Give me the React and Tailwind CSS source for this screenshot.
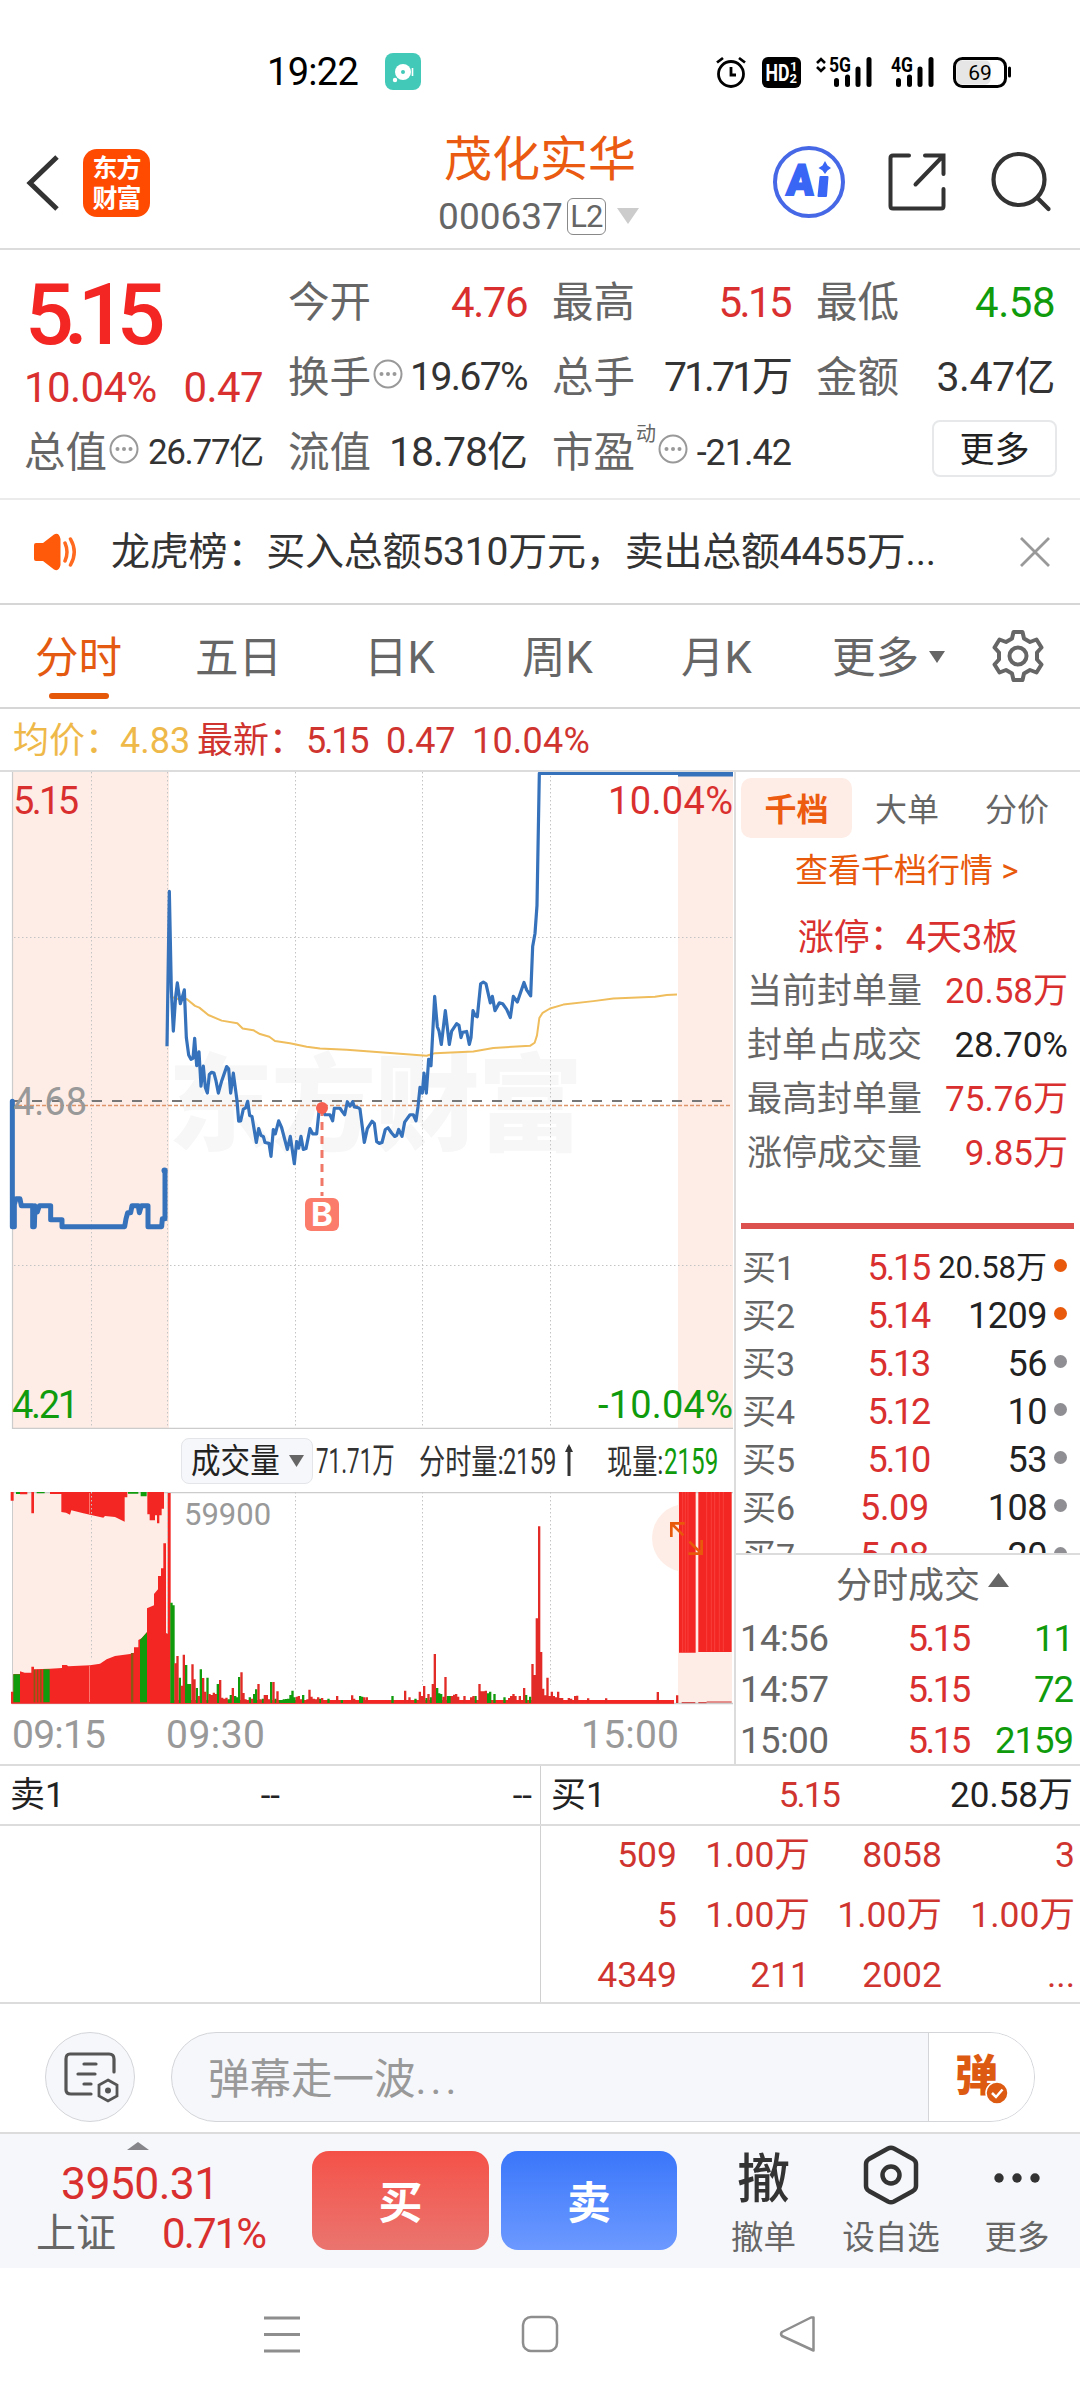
import React from "react";

const RED = "#f32624";
const GREEN = "#0f9b0c";

/* ---------- status bar ---------- */

function Signal({ label, arrows }) {
  return (
    <svg width="58" height="34" viewBox="0 0 58 34" className="overflow-visible">
      {arrows && (
        <g fill="none" stroke="#000" strokeWidth="2.6">
          <path d="M1 7 L5 3 L9 7" />
          <path d="M1 11 L5 15 L9 11" />
        </g>
      )}
      <text x="13" y="15.500" fontSize="20" fontWeight="700" fontFamily="Roboto" textLength="22" lengthAdjust="spacingAndGlyphs">
        {label}
      </text>
      <g stroke="#000" strokeWidth="5" strokeLinecap="round">
        <path d="M20.5 24.500 V28.500" />
        <path d="M31.5 21 V28.500" />
        <path d="M42 13 V28.500" />
        <path d="M53 3.500 V28.500" />
      </g>
    </svg>
  );
}

function StatusBar() {
  return (
    <div className="flex h-[120px] items-start pt-[53px]">
      <div className="ml-[267px] flex h-[38px] w-[92px] items-center text-[38px] leading-none tracking-[-0.7px] text-black">19:22</div>
      <svg width="36" height="37" viewBox="0 0 36 37" className="ml-[26px]">
        <rect width="36" height="37" rx="8" fill="#43c9b8" />
        <circle cx="18" cy="19" r="8" fill="#fff" />
        <circle cx="18" cy="19" r="2" fill="#43c9b8" />
        <circle cx="10" cy="27" r="2.2" fill="#fff" />
        <path d="M27.5 15 V23" stroke="#fff" strokeWidth="1.6" />
      </svg>
      <svg width="32" height="34" viewBox="0 0 32 34" className="ml-[294px] mt-[2px]" fill="none" stroke="#000" strokeWidth="2.800">
        <circle cx="16" cy="19" r="12.5" />
        <path d="M16 12 V20 H21" />
        <path d="M2 7.500 L8 3 M30 7.500 L24 3" />
      </svg>
      <svg width="39" height="31" viewBox="0 0 39 31" className="ml-[15px] mt-[4px]">
        <rect width="39" height="31" rx="6" />
        <g fill="#fff" fontFamily="Roboto" fontWeight="700">
          <text x="3.500" y="24" fontSize="23" textLength="24" lengthAdjust="spacingAndGlyphs">HD</text>
          <text x="28" y="14" fontSize="13">1</text>
          <text x="27.5" y="26" fontSize="13">2</text>
        </g>
      </svg>
      <div className="ml-[15px] mt-[3px] w-[58px]"><Signal label="5G" arrows /></div>
      <div className="ml-[4px] mt-[3px] w-[58px]"><Signal label="4G" /></div>
      <svg width="60" height="31" viewBox="0 0 60 31" className="ml-[17px] mt-[4px]">
        <rect x="1.5" y="1.5" width="51" height="28" rx="8" fill="#fff" stroke="#000" strokeWidth="3" />
        <rect x="3.5" y="3.5" width="34" height="24" rx="5" fill="#e6e6e6" />
        <path d="M56.5 11 V19" stroke="#000" strokeWidth="3" strokeLinecap="round" />
        <text x="27" y="22.500" fontSize="21" fontFamily="Roboto" textAnchor="middle">69</text>
      </svg>
    </div>
  );
}

/* ---------- header ---------- */

function Header() {
  return (
    <div className="flex h-[130px] items-start border-b-2 border-[#dcdcdc]">
      <svg width="34" height="58" viewBox="0 0 34 58" className="ml-[26px] mt-[34px]" fill="none" stroke="#333" strokeWidth="5">
        <path d="M31 3 L4 29 L31 55" />
      </svg>
      <div className="ml-[23px] mt-[29px] flex h-[68px] w-[67px] flex-col items-center justify-center gap-[5px] rounded-[14px] bg-[#ff4a02] text-[25px] font-bold leading-none tracking-[-1px] text-white">
        <span>东方</span>
        <span>财富</span>
      </div>
      <div className="ml-[230px] flex w-[320px] flex-col items-center">
        <div className="mt-[16px] text-[48px] leading-none text-[#ea5a10]">茂化实华</div>
        <div className="mt-[12px] flex h-[40px] items-center">
          <span className="ml-[-3px] text-[37px] leading-none text-[#666]">000637</span>
          <span className="ml-[4px] flex h-[37px] w-[39px] items-center justify-center rounded-[6px] border-[1.5px] border-[#888] text-[31px] leading-none tracking-[-1px] text-[#666]">L2</span>
          <svg width="22" height="16" viewBox="0 0 22 16" className="ml-[11px]"><path d="M0 0 H22 L11 16 Z" fill="#ccc" /></svg>
        </div>
      </div>
      <svg width="74" height="74" viewBox="0 0 74 74" className="ml-[72px] mt-[25px]">
        <circle cx="37" cy="37" r="34" fill="none" stroke="#4668e6" strokeWidth="4" />
        <text x="17.500" y="50" fontSize="43" fontFamily="Roboto" fontWeight="900" fill="#3a66f5" stroke="#3a66f5" strokeWidth="2" textLength="27" lengthAdjust="spacingAndGlyphs" transform="skewX(-4)">A</text>
        <path d="M48.500 32 H55.500 L54 51 H46.500 Z" fill="#3a66f5" stroke="#3a66f5" strokeWidth="2" strokeLinejoin="round" />
        <path d="M53 16 L55.5 20.5 L59 23 L55.500 25.500 L53 29 L50.500 25.500 L46.500 23 L50.500 20.500 Z" fill="#3a66f5" />
      </svg>
      <svg width="60" height="60" viewBox="0 0 60 60" className="ml-[41px] mt-[32px]" fill="none" stroke="#333" strokeWidth="4" strokeLinecap="round">
        <path d="M22 3.500 H6 Q3.500 3.500 3.500 6 V54 Q3.500 56.500 6 56.500 H54 Q56.500 56.500 56.500 54 V37" />
        <path d="M38 3.500 H56.500 V22 M56 4 L28.500 32.500" />
      </svg>
      <svg width="62" height="62" viewBox="0 0 62 62" className="ml-[44px] mt-[31px]" fill="none" stroke="#333" strokeWidth="4.200" strokeLinecap="round">
        <circle cx="28" cy="28.500" r="25.500" />
        <path d="M46.500 47 L57.500 58" />
      </svg>
    </div>
  );
}

/* ---------- quote summary ---------- */

function Info({ className }) {
  return (
    <svg width="30" height="30" viewBox="0 0 30 30" className={className}>
      <circle cx="15" cy="15" r="13.500" fill="none" stroke="#999" strokeWidth="2" />
      <g fill="#999"><circle cx="8.500" cy="15" r="2" /><circle cx="15" cy="15" r="2" /><circle cx="21.500" cy="15" r="2" /></g>
    </svg>
  );
}

function Stat({ label, value, className, extra, width }) {
  return (
    <div className={"flex h-[75px] items-center " + width}>
      <span className="text-[41.5px] leading-none text-[#666]">{label}</span>
      {extra}
      <span className={"ml-auto leading-none whitespace-nowrap " + className}>{value}</span>
    </div>
  );
}

function Summary() {
  const mid = "w-[239px] mr-[25px]";
  const mid2 = "w-[238px] mr-[26px]";
  return (
    <div className="flex h-[250px] items-start border-b-2 border-[#ebebeb] pl-[24px] pt-[15px]">
      <div className="w-[264px]">
        <div className="h-[96px] pl-[1px] pt-[7px] text-[86px] font-medium leading-none tracking-[-10px] text-[#f32624]">5.15</div>
        <div className="flex h-[54px] w-[239px] items-center justify-between text-[42px] leading-none tracking-[-0.600px] text-[#d9302f]">
          <span>10.04%</span><span>0.47</span>
        </div>
        <Stat label="总值" extra={<Info className="ml-[2px] mb-[7px]" />} value="26.77亿" className="text-[35px] text-[#333] tracking-[-1.3px]" width="w-[239px]" />
      </div>
      <div>
        <div className="flex">
          <Stat label="今开" value="4.76" className="text-[42px] text-[#d9302f] tracking-[-1.5px]" width={mid} />
          <Stat label="最高" value="5.15" className="text-[42px] text-[#d9302f] tracking-[-2.600px]" width={mid2} />
          <Stat label="最低" value="4.58" className="text-[42px] text-[#0f9b0c] tracking-[-0.5px]" width="w-[239px]" />
        </div>
        <div className="flex">
          <Stat label="换手" extra={<Info className="ml-[2px] mb-[7px]" />} value="19.67%" className="text-[39px] text-[#333] tracking-[-1.6px]" width={mid} />
          <Stat label="总手" value="71.71万" className="text-[41px] text-[#333] tracking-[-3px]" width={mid2} />
          <Stat label="金额" value="3.47亿" className="text-[41px] text-[#333] tracking-[-0.5px]" width="w-[239px]" />
        </div>
        <div className="flex">
          <Stat label="流值" value="18.78亿" className="text-[41px] text-[#333] tracking-[-1px]" width={mid} />
          <Stat
            label="市盈"
            extra={<><span className="mb-[38px] ml-[1px] text-[20px] leading-none text-[#666]">动</span><Info className="mb-[7px] ml-[2px]" /></>}
            value="-21.42"
            className="text-[36px] text-[#333] tracking-[-1px]"
            width="w-[239px] mr-[25px]"
          />
          <div className="flex w-[241px] justify-end pt-[5px]">
            <div className="flex h-[57px] w-[125px] items-center justify-center rounded-[8px] border-2 border-[#e6e8ea] pt-[3px] text-[35px] leading-none text-[#222]">更多</div>
          </div>
        </div>
      </div>
    </div>
  );
}

function NewsBar() {
  return (
    <div className="flex h-[105px] items-center border-b-2 border-[#d6d6d6]">
      <svg width="46" height="38" viewBox="0 0 46 38" className="ml-[33px]">
        <path d="M1 12 Q1 10 3 10 H10 L21 1.500 Q26 -1 27.500 6 V32 Q26 39 21 36.500 L10 28 H3 Q1 28 1 26 Z" fill="#ff5a0a" />
        <path d="M32 10 Q36 19 32 28 M37.500 6 Q45 19 37.500 32" fill="none" stroke="#ff6a20" strokeWidth="3.500" strokeLinecap="round" />
      </svg>
      <span className="ml-[32px] w-[831px] whitespace-nowrap pt-[2px] text-[39px] leading-none tracking-[-0.200px] text-[#333]">龙虎榜：买入总额5310万元，卖出总额4455万...</span>
      <svg width="30" height="30" viewBox="0 0 30 30" className="ml-[78px]" stroke="#999" strokeWidth="2.800"><path d="M1 1 L29 29 M29 1 L1 29" /></svg>
    </div>
  );
}

function Tabs() {
  return (
    <div className="flex h-[104px] items-center border-b-2 border-[#d6d6d6] text-[43.5px] leading-none text-[#666]">
      <div className="relative ml-[35px] w-[160px] pt-[6px] text-[#e35a10]">
        分时
        <div className="absolute left-[14px] top-[62px] h-[6px] w-[60px] rounded-full bg-[#e5580a]" />
      </div>
      <div className="w-[169px] pt-[6px]">五日</div>
      <div className="w-[158px] pt-[6px]">日K</div>
      <div className="w-[159px] pt-[6px]">周K</div>
      <div className="w-[151px] pt-[6px]">月K</div>
      <div className="w-[97px] pt-[6px]">更多</div>
      <svg width="16" height="12" viewBox="0 0 16 12" className="mt-[1px]"><path d="M0 0 H16 L8 12 Z" fill="#666" /></svg>
      <svg width="54" height="54" viewBox="0 0 54 54" className="ml-[46px]" fill="none" stroke="#666" strokeWidth="4" strokeLinejoin="round">
        <path d="M22.500 3 H31.500 L33 9.500 L39 13 L45.500 10.500 L50.500 18.500 L46 23.500 V30.500 L50.500 35.500 L45.500 43.500 L39 41 L33 44.500 L31.500 51 H22.500 L21 44.500 L15 41 L8.500 43.500 L3.500 35.500 L8 30.500 V23.500 L3.500 18.500 L8.500 10.500 L15 13 L21 9.500 Z" />
        <circle cx="27" cy="27" r="8.500" />
      </svg>
    </div>
  );
}

function PriceLine() {
  return (
    <div className="flex h-[63px] items-center whitespace-nowrap border-b-2 border-[#dcdcdc] pt-[2px] text-[36px] leading-none text-[#d0342f]">
      <span className="ml-[13px] w-[107px] text-[#efb94a]">均价：</span>
      <span className="w-[77px] text-[#efb94a]">4.83</span>
      <span className="w-[109px]">最新：</span>
      <span className="w-[80px] tracking-[-2.200px]">5.15</span>
      <span className="w-[86px] tracking-[-0.200px]">0.47</span>
      <span className="tracking-[0.200px]">10.04%</span>
    </div>
  );
}

/* ---------- price chart ---------- */

const AUCTION = "37,787 37,1076 43,1076 43,1025 48,1012 60,1012 64,1028 98,1028 98,1076 103,1076 105,1028 112,1042 118,1028 152,1028 152,1060 186,1060 186,1076 374,1076 378,1058 383,1044 392,1044 396,1028 415,1028 418,1044 424,1028 444,1028 444,1076 485,1076 487,1058 495,1058 495,947";
const PRICE =
  "501,660 508,303 514,530 520,625 527,545 532,514 541,562 546,550 553,530 559,640 566,680 573,690 579,688 584,642 590,705 597,673 603,752 610,706 616,755 622,768 628,725 635,720 642,722 648,740 655,768 665,740 680,707 686,712 692,768 700,722 711,785 716,833 722,832 730,805 737,802 743,787 749,820 756,822 769,882 776,850 783,866 790,868 795,882 807,884 813,914 820,852 826,862 836,832 845,848 862,898 871,868 883,931 890,880 896,895 903,868 910,898 918,896 930,850 938,862 950,862 957,810 966,803 975,818 990,818 998,832 1003,803 1020,803 1028,812 1034,818 1042,788 1050,798 1058,788 1063,800 1075,802 1080,805 1093,882 1102,850 1116,833 1123,838 1130,880 1138,884 1146,882 1156,852 1164,848 1175,860 1184,868 1190,866 1196,852 1206,868 1214,835 1230,818 1240,818 1248,832 1254,800 1260,755 1267,768 1272,722 1279,768 1286,690 1293,705 1304,545 1312,615 1317,625 1324,656 1336,578 1348,656 1355,625 1370,608 1377,612 1383,640 1388,628 1400,626 1408,656 1413,640 1419,578 1426,590 1432,592 1442,516 1450,512 1458,516 1471,560 1477,545 1485,578 1498,560 1508,562 1520,575 1531,594 1540,545 1552,558 1572,513 1580,530 1592,544 1598,430 1605,400 1611,335 1618,31 2196,31";
const AVERAGE = "510,545 540,553 560,551 585,567 598,571 625,588 665,601 712,607 728,619 760,623 780,632 808,638 825,648 870,653 920,661 960,665 1040,668 1110,672 1280,682 1305,676 1420,672 1480,664 1590,659 1604,652 1611,635 1618,595 1628,583 1650,573 1690,564 1780,556 1840,550 1965,546 2000,542 2031,541";

function PriceChart() {
  return (
    <svg width="734" height="657" viewBox="0 772 734 657" className="block" fontFamily="Roboto">
      <rect x="13" y="772" width="156" height="657" fill="#feede6" />
      <rect x="678" y="772" width="55" height="657" fill="#feede6" />
      <text x="168" y="1142" fontSize="105" fontWeight="900" fontFamily="Noto Sans CJK SC" fill="#f7f7f7" textLength="415">东方财富</text>
      <g stroke="#c4c4c4" strokeWidth="1" strokeDasharray="1.500 2.500">
        <path d="M91.500 772 V1428 M167.500 772 V1428 M295.500 772 V1428 M422.500 772 V1428 M550.500 772 V1428" />
        <path d="M14 937.500 H732 M14 1265.500 H732" />
      </g>
      <path d="M12.500 772 V1429" stroke="#ccc" strokeWidth="1.200" />
      <path d="M12 1428.500 H733" stroke="#ccc" strokeWidth="1.500" />
      <path d="M12 1101 H732" stroke="#777" strokeWidth="2" strokeDasharray="10 10" />
      <path d="M12 1105.500 H732" stroke="#dd9468" strokeWidth="1.500" strokeDasharray="4 2" />
      <g transform="translate(0 760) scale(0.33333 0.43367)" fill="none" strokeLinejoin="round">
        <polyline points={AVERAGE} stroke="#efbd5c" strokeWidth="2" vectorEffect="non-scaling-stroke" />
        <polyline points={AUCTION} stroke="#3572bb" strokeWidth="5" strokeLinecap="round" vectorEffect="non-scaling-stroke" />
        <polyline points={PRICE} stroke="#3572bb" strokeWidth="3.200" vectorEffect="non-scaling-stroke" />
      </g>
      <circle cx="164.500" cy="1170.500" r="3" fill="#3572bb" />
      <rect x="678" y="772" width="55" height="4.500" fill="#3572bb" />
      <path d="M322 1108 V1196" stroke="#f07869" strokeWidth="3" strokeDasharray="8 6" />
      <circle cx="322" cy="1108" r="6" fill="#f45f50" />
      <rect x="305" y="1198" width="34" height="33" rx="6" fill="#fb7c6b" />
      <text x="322" y="1226" fontSize="33" fontWeight="700" fill="#fff" textAnchor="middle" fontFamily="Inter">B</text>
      <g fontSize="38">
        <text x="13" y="814" fill="#d9302f" textLength="66">5.15</text>
        <text x="13" y="1115" fill="#999" textLength="74">4.68</text>
        <text x="12" y="1418" fill="#0f9b0c" textLength="67">4.21</text>
        <text x="608" y="814" fill="#d9302f" textLength="125">10.04%</text>
        <text x="598" y="1418" fill="#0f9b0c" textLength="135">-10.04%</text>
      </g>
    </svg>
  );
}

/* ---------- volume ---------- */

function VolumeBar() {
  return (
    <div className="flex h-[63px] items-center text-[35px] leading-none text-[#333]">
      <div className="ml-[181px] flex h-[46px] w-[132px] items-center rounded-[8px] border border-[#e3e5e9] bg-[#f6f7fa] pl-[9px] pt-[1px] text-[#222]">
        <span className="w-[98px] origin-left scale-x-[0.87] whitespace-nowrap text-[34px]">成交量</span>
        <svg width="15" height="12" viewBox="0 0 15 12"><path d="M0 0 H15 L7.500 12 Z" fill="#666" /></svg>
      </div>
      <span className="ml-[3px] w-[103px] origin-left scale-x-[0.64] whitespace-nowrap pt-[2px]">71.71万</span>
      <span className="w-[84px] origin-left scale-x-[0.770] whitespace-nowrap pt-[2px] text-[34px]">分时量:</span>
      <span className="w-[61px] origin-left scale-x-[0.660] whitespace-nowrap pt-[2px] text-[36px]">2159</span>
      <svg width="8" height="34" viewBox="0 0 8 34" className="mb-[2px] ml-[1px]"><path d="M4 4 V33" stroke="#333" strokeWidth="3" /><path d="M0 9 L4 1 L8 9 Z" fill="#333" /></svg>
      <span className="ml-[34px] w-[57px] origin-left scale-x-[0.740] whitespace-nowrap pt-[2px] text-[34px]">现量:</span>
      <span className="w-[50px] origin-left scale-x-[0.670] whitespace-nowrap pt-[2px] text-[36px] text-[#0f9b0c]">2159</span>
    </div>
  );
}

/* Bar tops, as "x,top" pairs on a grid of thirds of a pixel. */
const RED_BARS = "526,730 532,708 545,797 551,704 577,733 583,778 596,828 609,774 615,815 628,822 634,825 641,818 647,822 660,780 666,833 673,836 679,833 698,804 724,757 730,819 736,838 743,840 756,836 775,792 781,838 794,825 800,825 807,838 820,786 832,814 890,830 896,828 902,838 922,838 928,809 934,830 941,836 947,838 954,832 966,834 1011,828 1056,826 1062,836 1092,832 1100,832 1215,812 1228,832 1259,815 1265,828 1272,798 1285,822 1298,792 1304,702 1330,830 1336,771 1355,828 1362,824 1368,822 1374,830 1393,828 1413,832 1420,828 1438,792 1445,814 1451,814 1457,812 1527,834 1533,828 1540,822 1546,828 1559,828 1572,804 1597,732 1603,765 1610,595 1617,319 1623,696 1629,806 1636,826 1642,773 1648,828 1655,815 1661,828 1668,832 1674,815 1680,834 1686,834 1706,834 1713,836 1725,828 1731,827 1764,835 1818,835 1973,816 2031,826";
const GREEN_BARS = "514,548 520,556 539,773 558,735 564,792 570,792 590,804 602,748 622,773 653,792 685,838 692,825 705,828 711,832 717,771 749,832 762,822 768,808 788,836 813,786 826,836 839,840 845,840 851,838 858,837 864,836 871,825 877,812 883,832 909,825 960,836 985,836 1025,840 1080,828 1086,830 1177,828 1246,836 1279,834 1292,832 1311,804 1317,820 1323,822 1343,828 1349,828 1426,828 1464,820 1470,815 1483,822 1513,832 1578,825 1590,830";

function bars(list) {
  return list
    .split(" ")
    .map((pair) => {
      const [x, top] = pair.split(",").map(Number);
      return `M${x - 3} ${top} h7 V849 h-7 Z`;
    })
    .join("");
}

function VolumeChart() {
  return (
    <svg width="734" height="272" viewBox="0 1492 734 272" className="block" fontFamily="Roboto">
      <rect x="13" y="1492" width="155" height="211" fill="#feede6" />
      <rect x="678" y="1492" width="54" height="211" fill="#feede6" />
      <path d="M12 1492.500 H733 M12 1703.500 H733" stroke="#ccc" strokeWidth="1.500" />
      <path d="M12.500 1492 V1703" stroke="#ccc" />
      <circle cx="686" cy="1538" r="34" fill="#feede6" />
      <g transform="translate(0 1420) scale(0.33333)">
        <path fill={RED} d="M33 849 V815 H40 V762 H60 V754 L74 758 H94 V740 H102 V748 L150 746 L186 744 V735 H200 L205 739 L270 736 L300 731 L320 718 L345 708 L390 702 L402 698 V682 H415 V660 L425 655 L441 636 V565 L462 556 V522 L474 508 V468 H483 V445 H490 V370 H498 V640 H503 V219 H512 V849 Z" />
        <path fill={GREEN} d="M40 763 H60 V849 H40Z M130 748 H149 V849 H130Z M420 660 L441 637 V849 H420Z" />
        <path fill="#8a5a14" d="M101 749 h5 V849 h-5Z M111 749 h4 V849 h-4Z M120 749 h5 V849 h-5Z M393 699 h7 V849 h-7Z" />
        <path fill={RED} d="M32 216 H41 V242 H32Z M60 216 H82 V223 H60Z M94 216 H102 V280 H94Z M150 216 H184 V222 H150Z M184 216 V276 L198 278 L210 284 L214 271 L250 280 L310 293 L315 288 L345 291 L374 305 V232 H382 V216Z M442 216 V283 H449 V301 H465 V286 H471 V310 H478 V286 H485 V266 H492 V216Z" />
        <path fill={GREEN} d="M48 216 H60 V222 H48Z M110 216 H134 V220 H110Z M384 216 H415 V221 H384Z M422 216 H440 V229 H422Z" />
        <path fill={RED} d="M512 840 H2022 V850 H512Z" />
        <path fill={RED} d="M33 847 H2022 V851 H33Z" />
        <path fill={GREEN} d={bars(GREEN_BARS)} />
        <path fill="#e22b26" d={bars(RED_BARS)} />
        <path fill={RED} d="M2037 216 H2087 V698 H2037Z M2095 216 H2195 V696 H2095Z" />
        <path d="M2048 216 V696 M2056 216 V696 M2064 216 V696 M2120 216 V694 M2134 216 V694 M2144 216 V694 M2158 216 V694 M2170 216 V694" stroke="#ff5b55" strokeWidth="1.500" />
        <path d="M2045 848 H2086 M2095 848 H2120 M2120 846 H2195" stroke="#c33" strokeWidth="3" />
        <g stroke="#e8590c" strokeWidth="8" fill="none">
          <path d="M2054 310 H2014 V351 M2016 312 L2050 346" />
          <path d="M2105 360 V401 H2065 M2103 399 L2068 365" />
        </g>
      </g>
      <g stroke="#c4c4c4" strokeDasharray="1.500 2.500">
        <path d="M91.500 1492 V1660 M167.500 1492 V1634 M295.500 1492 V1690 M422.500 1492 V1685 M550.500 1492 V1685" />
      </g>
      <path d="M89.500 1666 V1702 M89.500 1493 V1514" stroke="#ff8a80" strokeWidth="0.800" />
      <g fill="#999">
        <text x="184" y="1525" fontSize="31">59900</text>
        <g fontSize="39">
          <text x="12" y="1748" textLength="94">09:15</text>
          <text x="166" y="1748" textLength="99">09:30</text>
          <text x="581" y="1748" textLength="98">15:00</text>
        </g>
      </g>
    </svg>
  );
}

/* ---------- order book ---------- */

const LIMIT_STATS = [
  ["当前封单量", "20.58万", "text-[#d9302f]"],
  ["封单占成交", "28.70%", "text-[#222]"],
  ["最高封单量", "75.76万", "text-[#d9302f]"],
  ["涨停成交量", "9.85万", "text-[#d9302f]"],
];
const BIDS = [
  ["买1", "5.15", "20.58万", true],
  ["买2", "5.14", "1209", true],
  ["买3", "5.13", "56", false],
  ["买4", "5.12", "10", false],
  ["买5", "5.10", "53", false],
  ["买6", "5.09", "108", false],
  ["买7", "5.08", "20", false],
];
const TRADES = [
  ["14:56", "5.15", "11"],
  ["14:57", "5.15", "72"],
  ["15:00", "5.15", "2159"],
];

function OrderBook() {
  return (
    <div className="flex h-[992px] w-[346px] flex-col border-l-2 border-[#dcdcdc] leading-none [&>*]:shrink-0">
      <div className="mt-[6px] flex h-[60px] items-center pl-[5px] text-[32px] text-[#666]">
        <div className="flex h-[60px] w-[111px] items-center justify-center rounded-[10px] bg-[#feede6] pt-[3px] font-bold text-[#ec5b10]">千档</div>
        <div className="ml-[23px] w-[110px] pt-[3px]">大单</div>
        <div className="pt-[3px]">分价</div>
      </div>
      <div className="flex h-[63px] items-center pl-[59px] pt-[2px] text-[33px] text-[#e8590c]">查看千档行情&nbsp;&gt;</div>
      <div className="mt-[10px] flex h-[52px] items-center justify-center pt-[2px] text-[36px] text-[#d9302f]">涨停：4天3板</div>
      {LIMIT_STATS.map(([label, value, color]) => (
        <div key={label} className="flex h-[54px] items-center justify-between pl-[11px] pr-[12px] pt-[2px] text-[35px]">
          <span className="text-[#666]">{label}</span>
          <span className={color}>{value}</span>
        </div>
      ))}
      <div className="ml-[5px] mt-[44px] h-[6px] w-[333px] bg-[#dc504d]" />
      <div className="h-[326px] overflow-hidden border-b-2 border-[#dcdcdc] pt-[14px]">
        {BIDS.map(([level, price, amount, hot]) => (
          <div key={level} className="flex h-[48px] items-center pl-[6px] pt-[1px] text-[36px]">
            <span className="w-[77px] text-[34px] text-[#666]">{level}</span>
            <span className={"w-[110px] text-right text-[#d9302f] " + (price[2] === "1" ? "tracking-[-2.200px]" : "tracking-[-0.300px]")}>{price}</span>
            <span className={"w-[118px] text-right text-[#222] " + (level === "买1" ? "text-[31px]" : "tracking-[-0.500px]")}>{amount}</span>
            <span className={"mb-[5px] ml-[7px] h-[13px] w-[13px] rounded-full " + (hot ? "bg-[#e8590c]" : "bg-[#8e8e93]")} />
          </div>
        ))}
      </div>
      <div className="flex h-[57px] items-center pl-[100px] pt-[4px] text-[36px] text-[#666]">
        分时成交
        <svg width="21" height="14" viewBox="0 0 21 14" className="mb-[11px] ml-[8px]"><path d="M0 14 H21 L10.500 0 Z" fill="#666" /></svg>
      </div>
      {TRADES.map(([time, price, amount]) => (
        <div key={time} className="flex h-[51px] items-center pl-[4px] pt-[3px] text-[36.5px]">
          <span className="w-[120px] tracking-[-0.500px] text-[#666]">{time}</span>
          <span className="w-[109px] text-right tracking-[-2.400px] text-[#d9302f]">{price}</span>
          <span className="w-[104px] text-right tracking-[-1px] text-[#0f9b0c]">{amount}</span>
        </div>
      ))}
    </div>
  );
}

const QUEUE = ["509", "1.00万", "8058", "3", "5", "1.00万", "1.00万", "1.00万", "4349", "211", "2002", "..."];

function Level2() {
  return (
    <div className="h-[240px] border-y-2 border-[#dcdcdc] bg-white leading-none">
      <div className="flex h-[60px] items-center border-b-2 border-[#dcdcdc] text-[35px] text-[#222]">
        <div className="flex h-full w-[541px] items-center border-r border-[#d0d0d0]">
          <span className="w-[179px] pl-[10px]">卖1</span>
          <span className="w-[101px] text-right">--</span>
          <span className="w-[252px] text-right">--</span>
        </div>
        <span className="w-[120px] pl-[10px]">买1</span>
        <span className="w-[178px] text-right tracking-[-2px] text-[#d0342f]">5.15</span>
        <span className="w-[234px] text-right">20.58万</span>
      </div>
      <div className="flex h-[176px]">
        <div className="w-[541px] border-r border-[#d0d0d0]" />
        <div className="grid w-[535px] grid-cols-[136px_133px_132px_133px] auto-rows-[60px] text-[35.5px] text-[#d0342f]">
          {QUEUE.map((q, i) => (
            <span key={i} className="flex items-center justify-end">{q}</span>
          ))}
        </div>
      </div>
    </div>
  );
}

/* ---------- footer ---------- */

function Danmaku() {
  return (
    <div className="flex h-[128px] items-start pt-[28px]">
      <div className="ml-[45px] flex h-[90px] w-[90px] items-center justify-center rounded-full border-[1.500px] border-[#d3d5d9] bg-[#f6f7fa]">
        <svg width="56" height="52" viewBox="0 0 56 52" className="ml-[3px]" fill="none" stroke="#555" strokeWidth="3.200" strokeLinecap="round">
          <path d="M50 21 V8 Q50 3 45 3 H6 Q2 3 2 8 V39 Q2 43 7 43 H27" />
          <path d="M20 13 H32 M14 23 H31 M20 33 H27" />
          <path d="M44 29 L53 34 V45 L44 50 L35 45 V34 Z" fill="#f6f7fa" strokeWidth="2.800" />
          <circle cx="44" cy="39.500" r="3" fill="#555" stroke="none" />
        </svg>
      </div>
      <div className="ml-[36px] flex h-[90px] w-[864px] overflow-hidden rounded-full border-[1.500px] border-[#d3d5d9] bg-[#f6f7fa]">
        <div className="flex w-[756px] items-center pl-[36px] pt-[5px] text-[41.5px] leading-none text-[#999]">弹幕走一波<span className="tracking-[4px]">...</span></div>
        <div className="relative flex-1 border-l-[1.500px] border-[#d3d5d9] bg-white pl-[26px] pt-[22px] text-[43px] font-black leading-none text-[#dd5a12]">
          弹
          <svg width="24" height="24" viewBox="0 0 24 24" className="absolute left-[56px] top-[48px]">
            <circle cx="12" cy="12" r="11" fill="#dd5a12" stroke="#fff" strokeWidth="1.500" />
            <path d="M7 12 L11 16 L17.500 8.500" fill="none" stroke="#fff" strokeWidth="2.500" />
          </svg>
        </div>
      </div>
    </div>
  );
}

function ActionBar() {
  return (
    <div className="flex h-[136px] border-t-2 border-[#dcdcdc] bg-[#f6f7fa] leading-none">
      <div className="w-[312px] pt-[8px]">
        <svg width="22" height="8" viewBox="0 0 22 8" className="ml-[127px] block"><path d="M0 8 H22 L11 0 Z" fill="#85858a" /></svg>
        <div className="ml-[61px] mt-[12px] text-[44.5px] tracking-[-0.600px] text-[#d9302f]">3950.31</div>
        <div className="mt-[6px] flex items-center">
          <span className="ml-[36px] w-[126px] text-[40px] text-[#666]">上证</span>
          <span className="text-[42px] tracking-[-1.900px] text-[#d9302f]">0.71%</span>
        </div>
      </div>
      <div className="mt-[17px] flex h-[99px] w-[177px] items-center justify-center rounded-[17px] bg-linear-to-b from-[#f45148] to-[#ea746f] pt-[7px] text-[44px] font-bold text-white">买</div>
      <div className="ml-[12px] mt-[17px] flex h-[99px] w-[176px] items-center justify-center rounded-[17px] bg-linear-to-b from-[#3a76fa] to-[#6c99ff] pt-[7px] text-[44px] font-bold text-white">卖</div>
      <div className="ml-[38px] flex w-[97px] flex-col items-center text-[#666]">
        <span className="mt-[20px] text-[53px] font-medium text-[#333]">撤</span>
        <span className="mt-[15px] text-[32.5px]">撤单</span>
      </div>
      <div className="ml-[30px] flex w-[98px] flex-col items-center text-[#666]">
        <svg width="56" height="60" viewBox="0 0 56 60" className="mt-[11px]" fill="none" stroke="#333" strokeWidth="4.500">
          <path d="M25 3.500 Q28 2 31 3.500 L50 14 Q53 16 53 19 V41 Q53 44 50 46 L31 56.500 Q28 58 25 56.500 L6 46 Q3 44 3 41 V19 Q3 16 6 14 Z" />
          <circle cx="28" cy="30" r="8.500" />
        </svg>
        <span className="mt-[17px] text-[32.5px]">设自选</span>
      </div>
      <div className="ml-[28px] flex w-[98px] flex-col items-center text-[#666]">
        <svg width="46" height="10" viewBox="0 0 46 10" className="mt-[39px]" fill="#333"><circle cx="5" cy="5" r="4.700" /><circle cx="23" cy="5" r="4.700" /><circle cx="41" cy="5" r="4.700" /></svg>
        <span className="mt-[39px] text-[32.5px]">更多</span>
      </div>
    </div>
  );
}

function NavBar() {
  return (
    <div className="flex h-[132px] items-start pt-[47px]">
      <svg width="36" height="38" viewBox="0 0 36 38" className="ml-[264px]" stroke="#8e8e8e" strokeWidth="3"><path d="M0 3 H36 M0 19.500 H36 M0 36 H36" /></svg>
      <svg width="38" height="38" viewBox="0 0 38 38" className="ml-[221px]" fill="none" stroke="#8e8e8e" strokeWidth="2.500"><rect x="2" y="2" width="34" height="34" rx="8" /></svg>
      <svg width="38" height="38" viewBox="0 0 38 38" className="ml-[220px]" fill="none" stroke="#8e8e8e" strokeWidth="2.500" strokeLinejoin="round"><path d="M34.500 2.500 V35.500 L3 21 Q1 19 3 17 L32 2.500 Z" /></svg>
    </div>
  );
}

export default function App() {
  return (
    <div className="h-[2400px] w-[1080px] overflow-hidden bg-white font-['Roboto','Noto_Sans_CJK_SC',sans-serif]">
      <StatusBar />
      <Header />
      <Summary />
      <NewsBar />
      <Tabs />
      <PriceLine />
      <div className="flex h-[992px]">
        <div className="w-[734px]">
          <PriceChart />
          <VolumeBar />
          <VolumeChart />
        </div>
        <OrderBook />
      </div>
      <Level2 />
      <Danmaku />
      <ActionBar />
      <NavBar />
    </div>
  );
}
